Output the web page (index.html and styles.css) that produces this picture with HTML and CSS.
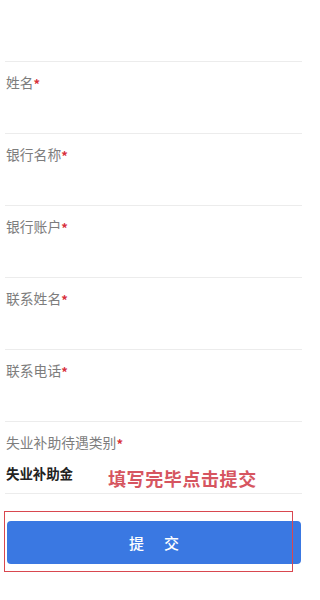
FILE: index.html
```html
<!DOCTYPE html>
<html lang="zh-CN">
<head>
<meta charset="utf-8">
<title>失业补助金申请</title>
<link rel="stylesheet" href="styles.css">
</head>
<body>
<div class="page">
  <div class="top-space"></div>
  <form class="form">
    <div class="row">
      <div class="label">姓名<span class="req">*</span></div>
    </div>
    <div class="row">
      <div class="label">银行名称<span class="req">*</span></div>
    </div>
    <div class="row">
      <div class="label">银行账户<span class="req">*</span></div>
    </div>
    <div class="row">
      <div class="label">联系姓名<span class="req">*</span></div>
    </div>
    <div class="row">
      <div class="label">联系电话<span class="req">*</span></div>
    </div>
    <div class="row row-last">
      <div class="label">失业补助待遇类别<span class="req">*</span></div>
      <div class="value">失业补助金</div>
      <div class="note">填写完毕点击提交</div>
    </div>
    <div class="submit-wrap">
      <div class="highlight"></div>
      <button type="button" class="submit"><span>提</span><span>交</span></button>
    </div>
  </form>
</div>
</body>
</html>
```
FILE: styles.css
```css
html, body {
  margin: 0;
  padding: 0;
  background: #ffffff;
}
body {
  font-family: "Noto Sans CJK SC", "Noto Sans", sans-serif;
}
.page {
  width: 302px;
  height: 600px;
  overflow: hidden;
}
.top-space {
  height: 61px;
}
.form {
  padding-left: 5px;
}
.row {
  position: relative;
  height: 71px;
  border-top: 1px solid #ececec;
  box-sizing: content-box;
}
.row-last {
  height: 71px;
  border-bottom: 1px solid #ececec;
}
.label {
  margin-top: 10px;
  padding-left: 1px;
  font-size: 13.8px;
  line-height: 20px;
  color: #7d7d7d;
  white-space: nowrap;
}
.req {
  color: #d8323c;
  font-size: 13px;
  font-weight: 700;
  margin-left: 0;
  position: relative;
  top: 1px;
}
.value {
  margin-top: 10px;
  padding-left: 1px;
  font-size: 13.5px;
  line-height: 20px;
  font-weight: 700;
  color: #222222;
  letter-spacing: -0.1px;
}
.note {
  position: absolute;
  left: 103px;
  top: 45px;
  font-size: 18px;
  line-height: 22px;
  font-weight: 700;
  color: #d65560;
  letter-spacing: 0.6px;
  white-space: nowrap;
}
.submit-wrap {
  position: relative;
  margin-top: 27px;
  padding-left: 2px;
}
.submit {
  display: flex;
  justify-content: center;
  align-items: center;
  gap: 20px;
  width: 294px;
  height: 43px;
  border: none;
  border-radius: 4px;
  background: #3a78e2;
  color: #ffffff;
  font-family: "Noto Sans CJK SC", "Noto Sans", sans-serif;
  font-size: 15px;
  font-weight: 500;
  padding: 0;
}
.highlight {
  position: absolute;
  left: -1px;
  top: -10px;
  width: 289px;
  height: 61px;
  border: 1.5px solid #d9474f;
  box-sizing: border-box;
  z-index: 2;
  pointer-events: none;
}
```
